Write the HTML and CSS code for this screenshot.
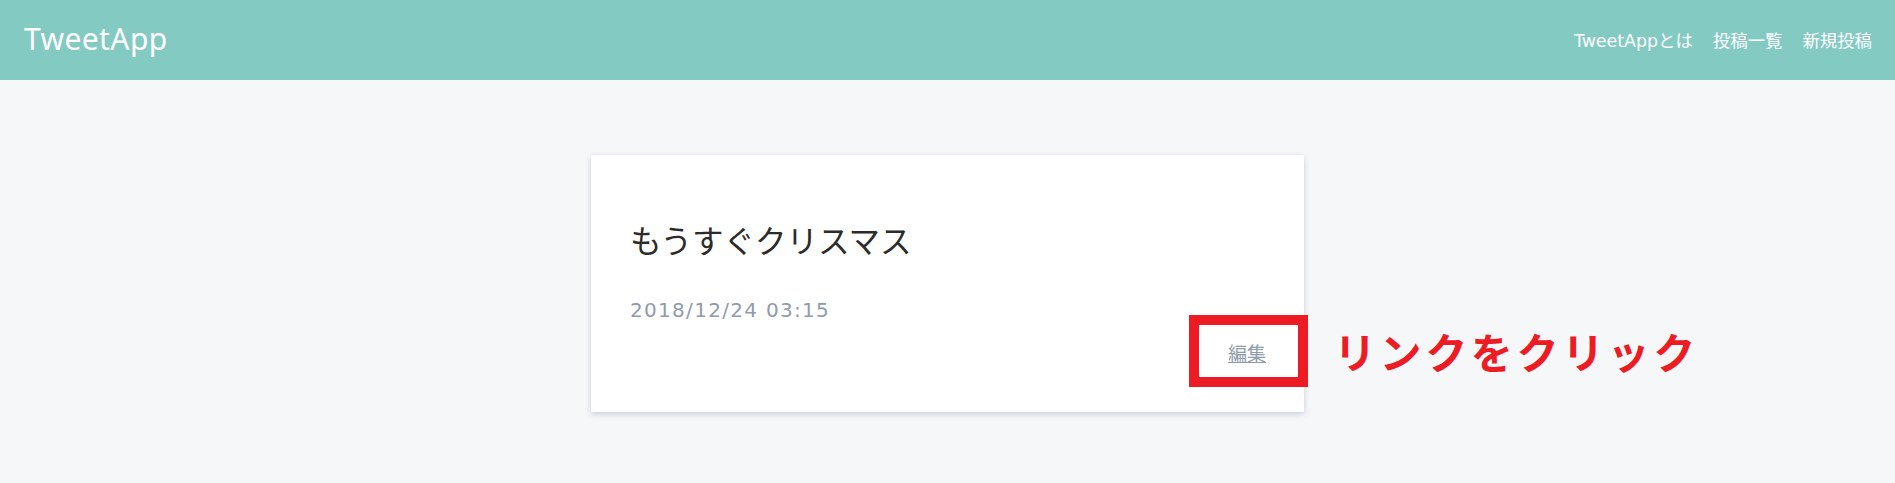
FILE: index.html
```html
<!DOCTYPE html>
<html lang="ja">
<head>
<meta charset="utf-8">
<title>TweetApp</title>
<link rel="stylesheet" href="styles.css">
</head>
<body>
<header class="header">
  <div class="logo">TweetApp</div>
  <nav class="nav">
    <a class="nav-link" href="#">TweetAppとは</a>
    <a class="nav-link" href="#">投稿一覧</a>
    <a class="nav-link" href="#">新規投稿</a>
  </nav>
</header>
<main class="main">
  <div class="card">
    <h1 class="post-title">もうすぐクリスマス</h1>
    <div class="post-date">2018/12/24 03:15</div>
    <div class="post-menus">
      <span class="edit-wrap">
        <a class="edit-link" href="#">編集</a>
        <span class="highlight-box"></span>
        <span class="annotation">リンクをクリック</span>
      </span>
    </div>
  </div>
</main>
</body>
</html>
```
FILE: styles.css
```css
* { box-sizing: border-box; }
html, body { margin: 0; padding: 0; }
body {
  background: #f6f7f9;
  font-family: "DejaVu Sans", "Noto Sans CJK JP", sans-serif;
  width: 1895px;
  height: 483px;
  overflow: hidden;
}
.header {
  height: 80px;
  background: #83cac3;
  display: flex;
  align-items: center;
  justify-content: space-between;
  padding: 0 23px 0 24px;
}
.logo {
  color: #fff;
  font-family: "Noto Sans", "DejaVu Sans", sans-serif;
  font-size: 30px;
  letter-spacing: 0.4px;
  padding-bottom: 4px;
}
.nav {
  display: flex;
  gap: 20px;
  padding-bottom: 1px;
}
.nav-link {
  color: #fff;
  text-decoration: none;
  font-size: 17.4px;
}
.main {
  padding-top: 75px;
  display: flex;
  justify-content: center;
}
.card {
  width: 713px;
  height: 257px;
  background: #fff;
  box-shadow: 0 2px 6px #c4d0da;
  padding: 64px 38px 0 39px;
}
.post-title {
  margin: 0;
  font-family: "Noto Sans CJK JP", sans-serif;
  font-weight: 400;
  font-size: 31.5px;
  line-height: 40px;
  color: #2b2b2b;
}
.post-date {
  margin-top: 39px;
  font-size: 20px;
  line-height: 24px;
  letter-spacing: 1.3px;
  color: #8f9bab;
}
.post-menus {
  margin-top: 17px;
  display: flex;
  justify-content: flex-end;
}
.edit-wrap {
  position: relative;
  display: inline-block;
}
.edit-link {
  font-family: "Noto Sans CJK JP", sans-serif;
  font-size: 19px;
  line-height: 28px;
  color: #8f9bab;
  text-decoration: underline;
}
.highlight-box {
  position: absolute;
  left: -39px;
  top: -24px;
  width: 119px;
  height: 72px;
  border: 10px solid #ed1c24;
}
.annotation {
  position: absolute;
  left: 106px;
  top: -18px;
  white-space: nowrap;
  font-family: "Noto Sans CJK JP", sans-serif;
  font-weight: 700;
  font-size: 42px;
  line-height: 60px;
  letter-spacing: 3.6px;
  color: #ed1c24;
}
```
